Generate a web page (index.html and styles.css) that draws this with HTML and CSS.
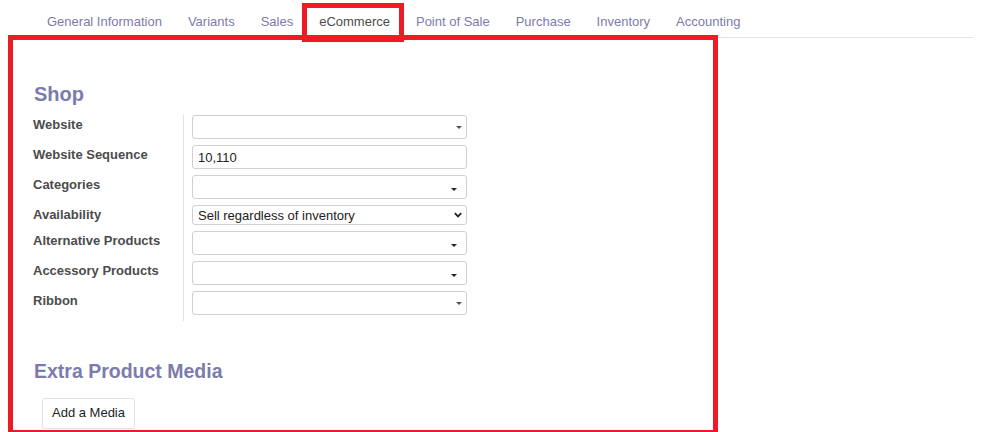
FILE: index.html
```html
<!DOCTYPE html>
<html lang="en">
<head>
    <meta charset="UTF-8">
    <title>Product - eCommerce</title>
    <link rel="stylesheet" href="styles.css">
</head>
<body>
    <div class="form-sheet">
        <ul class="nav-tabs">
            <li><a href="#">General Information</a></li>
            <li><a href="#">Variants</a></li>
            <li><a href="#">Sales</a></li>
            <li><a href="#" class="active">eCommerce</a></li>
            <li><a href="#">Point of Sale</a></li>
            <li><a href="#">Purchase</a></li>
            <li><a href="#">Inventory</a></li>
            <li><a href="#">Accounting</a></li>
        </ul>

        <div class="tab-pane">
            <h2 class="group-title shop-title">Shop</h2>
            <div class="group">
                <label class="field-label">Website</label>
                <div class="field-cell">
                    <div class="field-input"><span class="caret"></span></div>
                </div>

                <label class="field-label">Website Sequence</label>
                <div class="field-cell">
                    <input type="text" class="field-input" value="10,110">
                </div>

                <label class="field-label">Categories</label>
                <div class="field-cell">
                    <div class="field-input tags"><span class="caret caret-tags"></span></div>
                </div>

                <label class="field-label">Availability</label>
                <div class="field-cell">
                    <div class="select-wrap">
                        <select class="field-select">
                            <option>Sell regardless of inventory</option>
                        </select>
                        <svg class="chevron" width="8" height="6" viewBox="0 0 8 6">
                            <path d="M0.8 1.2 L4 4.4 L7.2 1.2" fill="none" stroke="#222" stroke-width="1.8"/>
                        </svg>
                    </div>
                </div>

                <label class="field-label">Alternative Products</label>
                <div class="field-cell">
                    <div class="field-input tags"><span class="caret caret-tags"></span></div>
                </div>

                <label class="field-label">Accessory Products</label>
                <div class="field-cell">
                    <div class="field-input tags"><span class="caret caret-tags"></span></div>
                </div>

                <label class="field-label">Ribbon</label>
                <div class="field-cell">
                    <div class="field-input"><span class="caret"></span></div>
                </div>
            </div>

            <h2 class="group-title media-title">Extra Product Media</h2>
            <button type="button" class="btn-media">Add a Media</button>
        </div>

        <!-- annotation boxes -->
        <div class="mark mark-tab"></div>
        <div class="mark mark-pane"></div>
    </div>
</body>
</html>
```

FILE: styles.css
```css
body {
    margin: 0;
    background-color: #ffffff;
    font-family: "Liberation Sans", Arial, sans-serif;
    font-size: 13px;
    color: #4c4c4c;
    overflow: hidden;
}

.form-sheet {
    position: relative;
    width: 1003px;
    height: 432px;
}

.nav-tabs {
    display: flex;
    list-style: none;
    margin: 0 0 0 34px;
    padding: 0;
    width: 939px;
    border-bottom: 1px solid #e2e2e2;
}

.nav-tabs a {
    display: block;
    padding: 12px 13px 6px;
    line-height: 19px;
    color: #7c7bad;
    text-decoration: none;
}

.nav-tabs a.active {
    color: #4c4c4c;
}

.tab-pane {
    padding: 0 0 0 33px;
}

.group-title {
    margin: 0;
    font-weight: bold;
    color: #7c7bad;
    line-height: 24px;
}

.shop-title {
    font-size: 20px;
    margin: 44px 0 9px 1px;
}

.media-title {
    font-size: 19.5px;
    margin: 38px 0 15px 1px;
}

.group {
    display: grid;
    grid-template-columns: 150px 284px;
}

.field-label {
    padding-top: 1px;
    font-weight: bold;
    line-height: 18px;
    color: #4c4c4c;
}

.field-cell {
    border-left: 1px solid #e2e2e2;
    padding: 0 0 6px 8px;
}

.field-input {
    position: relative;
    box-sizing: border-box;
    width: 275px;
    height: 24px;
    margin: 0;
    padding: 0 5px;
    border: 1px solid #d0d0d0;
    border-radius: 3px;
    background-color: #ffffff;
    font-family: inherit;
    font-size: 13px;
    color: #222222;
    outline: none;
}

.caret {
    position: absolute;
    right: 4px;
    top: 10px;
    width: 0;
    height: 0;
    border-left: 3px solid transparent;
    border-right: 3px solid transparent;
    border-top: 3px solid #555555;
}

.caret-tags {
    right: 9px;
    top: 12px;
    border-left-width: 3.5px;
    border-right-width: 3.5px;
    border-top-color: #222222;
}

.select-wrap {
    position: relative;
    width: 275px;
}

.field-select {
    display: block;
    box-sizing: border-box;
    width: 275px;
    height: 20px;
    margin: 0;
    padding: 0 5px;
    border: 1px solid #d0d0d0;
    border-radius: 3px;
    background-color: #ffffff;
    font-family: inherit;
    font-size: 13px;
    color: #222222;
    appearance: none;
    -webkit-appearance: none;
    outline: none;
}

.chevron {
    position: absolute;
    right: 5px;
    top: 7px;
}

.btn-media {
    margin-left: 9px;
    padding: 5px 9px 6px;
    border: 1px solid #dee2e6;
    border-radius: 3px;
    background-color: #ffffff;
    font-family: inherit;
    font-size: 13px;
    line-height: 18px;
    color: #212529;
}

.mark {
    position: absolute;
    border: 5px solid #ed1c24;
    box-sizing: border-box;
    pointer-events: none;
}

.mark-tab {
    left: 302px;
    top: 3px;
    width: 102px;
    height: 39px;
}

.mark-pane {
    left: 8px;
    top: 35px;
    width: 710px;
    height: 400px;
}
```
